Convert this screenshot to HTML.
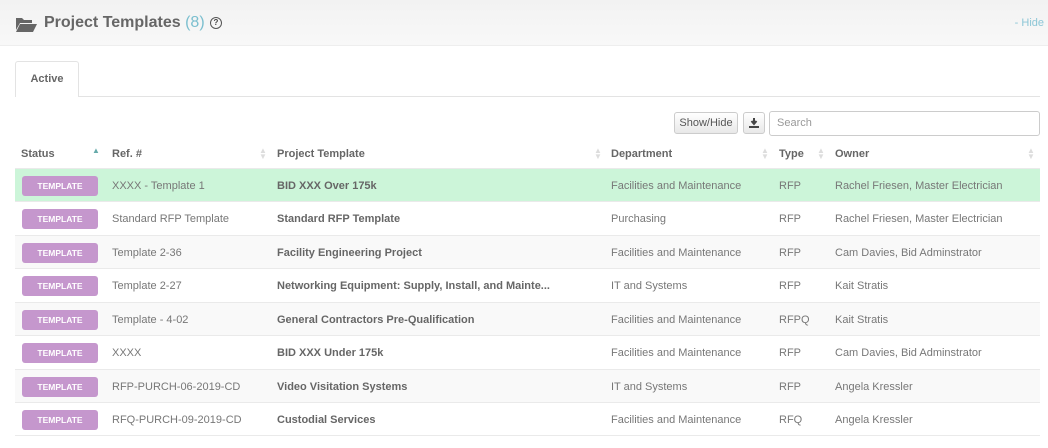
<!DOCTYPE html>
<html><head><meta charset="utf-8"><style>
*{box-sizing:border-box;margin:0;padding:0}
body{width:1048px;height:448px;overflow:hidden;background:#fff;font-family:"Liberation Sans",Arial,sans-serif;color:#777;font-size:11px;position:relative}
.hdr{position:absolute;left:0;top:0;width:1048px;height:46px;background:linear-gradient(#f2f2f2,#f8f8f8);border-bottom:1px solid #eee}
.title{position:absolute;left:44px;top:14px;font-size:16px;font-weight:bold;color:#666;white-space:nowrap}
.title span{color:#7bbfcf;font-weight:normal}
.q{position:absolute;left:210px;top:17px;width:12px;height:12px;border:1.5px solid #555;border-radius:50%;font-size:8px;font-weight:bold;color:#444;text-align:center;line-height:9px}
.hide{position:absolute;right:4px;top:17px;color:#8cc6d6;font-size:11px}
.tab{position:absolute;left:15px;top:61px;width:64px;height:36px;border:1px solid #e3e3e3;border-bottom:none;border-radius:3px 3px 0 0;background:#fff;font-weight:bold;font-size:11px;color:#666;text-align:center;line-height:34px}
.tabline{position:absolute;left:78px;top:96px;width:962px;border-top:1px solid #e3e3e3}
.btn{position:absolute;top:112px;height:22px;border:1px solid #ccc;border-radius:3px;background:linear-gradient(#fff,#e8e8e8);font-size:11px;color:#555;text-align:center;line-height:20px}
.search{position:absolute;left:769px;top:111px;width:271px;height:25px;border:1px solid #ccc;border-radius:3px;padding-left:7px;line-height:23px;color:#999;font-size:11px}
.th{position:absolute;top:148px;font-weight:bold;color:#666;font-size:11px}
.sort{position:absolute;top:148px;color:#ddd;font-size:8px;line-height:6px}
.row{position:absolute;left:15px;width:1025px;height:34px;border-top:1px solid #eaeaea}
.row.o{background:#f9f9f9}
.row.g{background:#ccf5d9}
.row div{position:absolute;top:11px;white-space:nowrap}
.badge{left:7px!important;top:7px!important;width:76px;height:20px;background:#c597cd;border-radius:3px;color:#fff;font-size:8.5px;font-weight:bold;text-align:center;line-height:20px}
.b{font-weight:bold;color:#666}
</style></head><body>
<div class="hdr">
<svg style="position:absolute;left:15px;top:16px" width="22" height="16" viewBox="0 0 22 16"><path d="M1 2h6l2 2h8v3H5L1 14z" fill="#666"/><path d="M5 8h17l-4 8H1z" fill="#666"/></svg>
<div class="title">Project Templates <span>(8)</span></div>
<div class="q">?</div>
<div class="hide">- Hide</div>
</div>
<div class="tab">Active</div>
<div class="tabline"></div>
<div class="btn" style="left:674px;width:64px">Show/Hide</div>
<div class="btn" style="left:743px;width:22px"><svg width="10" height="10" viewBox="0 0 10 10" style="margin-top:5px"><path d="M5 0v5M2.5 3l2.5 3 2.5-3" stroke="#444" stroke-width="2" fill="none"/><rect x="0" y="8" width="10" height="2" fill="#444"/></svg></div>
<div class="search">Search</div>
<div class="th" style="left:21px">Status</div><div class="sort" style="left:92px;color:#6aa;font-size:8px">▲</div>
<div class="th" style="left:112px">Ref. #</div><div class="sort" style="left:259px">▲<br>▼</div>
<div class="th" style="left:277px">Project Template</div><div class="sort" style="left:594px">▲<br>▼</div>
<div class="th" style="left:611px">Department</div><div class="sort" style="left:761px">▲<br>▼</div>
<div class="th" style="left:779px">Type</div><div class="sort" style="left:817px">▲<br>▼</div>
<div class="th" style="left:835px">Owner</div><div class="sort" style="left:1027px">▲<br>▼</div>

<div class="row g" style="top:168px"><div class="badge">TEMPLATE</div><div style="left:97px">XXXX - Template 1</div><div class="b" style="left:262px">BID XXX Over 175k</div><div style="left:596px">Facilities and Maintenance</div><div style="left:764px">RFP</div><div style="left:820px">Rachel Friesen, Master Electrician</div></div>
<div class="row" style="top:201px"><div class="badge">TEMPLATE</div><div style="left:97px">Standard RFP Template</div><div class="b" style="left:262px">Standard RFP Template</div><div style="left:596px">Purchasing</div><div style="left:764px">RFP</div><div style="left:820px">Rachel Friesen, Master Electrician</div></div>
<div class="row o" style="top:235px"><div class="badge">TEMPLATE</div><div style="left:97px">Template 2-36</div><div class="b" style="left:262px">Facility Engineering Project</div><div style="left:596px">Facilities and Maintenance</div><div style="left:764px">RFP</div><div style="left:820px">Cam Davies, Bid Adminstrator</div></div>
<div class="row" style="top:268px"><div class="badge">TEMPLATE</div><div style="left:97px">Template 2-27</div><div class="b" style="left:262px">Networking Equipment: Supply, Install, and Mainte...</div><div style="left:596px">IT and Systems</div><div style="left:764px">RFP</div><div style="left:820px">Kait Stratis</div></div>
<div class="row o" style="top:302px"><div class="badge">TEMPLATE</div><div style="left:97px">Template - 4-02</div><div class="b" style="left:262px">General Contractors Pre-Qualification</div><div style="left:596px">Facilities and Maintenance</div><div style="left:764px">RFPQ</div><div style="left:820px">Kait Stratis</div></div>
<div class="row" style="top:335px"><div class="badge">TEMPLATE</div><div style="left:97px">XXXX</div><div class="b" style="left:262px">BID XXX Under 175k</div><div style="left:596px">Facilities and Maintenance</div><div style="left:764px">RFP</div><div style="left:820px">Cam Davies, Bid Adminstrator</div></div>
<div class="row o" style="top:369px"><div class="badge">TEMPLATE</div><div style="left:97px">RFP-PURCH-06-2019-CD</div><div class="b" style="left:262px">Video Visitation Systems</div><div style="left:596px">IT and Systems</div><div style="left:764px">RFP</div><div style="left:820px">Angela Kressler</div></div>
<div class="row" style="top:402px;border-bottom:1px solid #eaeaea"><div class="badge">TEMPLATE</div><div style="left:97px">RFQ-PURCH-09-2019-CD</div><div class="b" style="left:262px">Custodial Services</div><div style="left:596px">Facilities and Maintenance</div><div style="left:764px">RFQ</div><div style="left:820px">Angela Kressler</div></div>
</body></html>
